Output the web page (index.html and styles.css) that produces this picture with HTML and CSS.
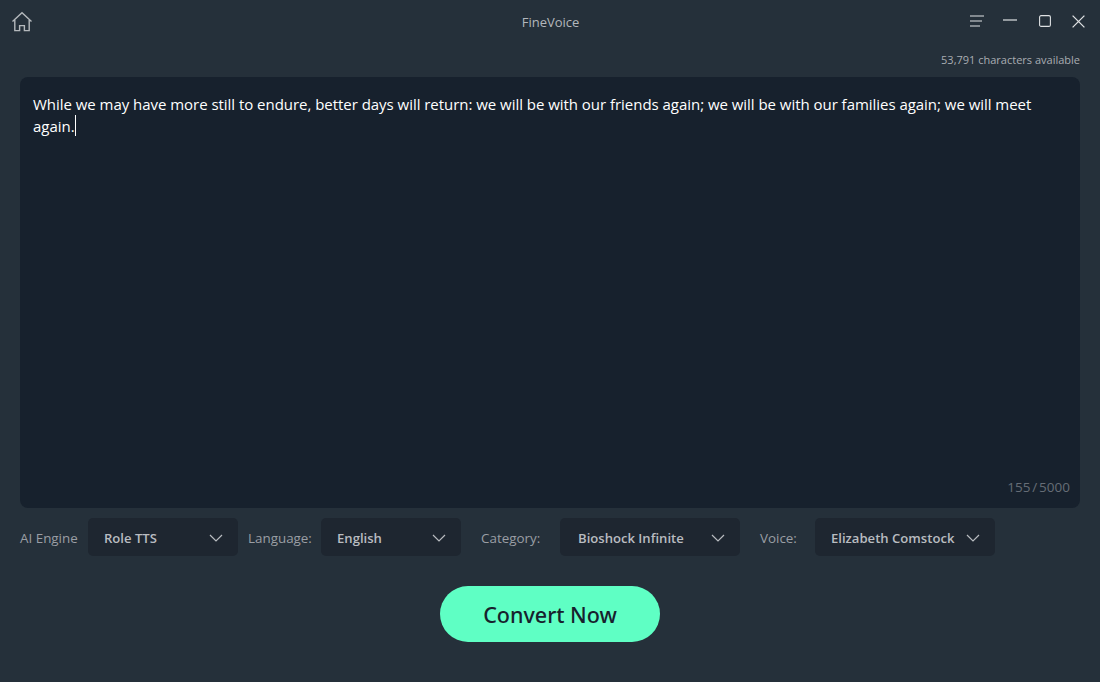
FILE: index.html
```html
<!DOCTYPE html>
<html lang="en">
<head>
    <meta charset="UTF-8">
    <title>FineVoice</title>
    <link rel="stylesheet" href="styles.css">
</head>
<body>
    <div class="app">
        <div class="titlebar">
            <svg class="home-icon" width="22" height="22" viewBox="0 0 22 22" fill="none" stroke="#b4b8bc" stroke-width="1.4">
                <path d="M1.5 10.5 L11 1.8 L20.5 10.5 M3.8 9 V19.6 H8.6 V14.6 H13.4 V19.6 H18.2 V9"/>
            </svg>
            <div class="app-name">FineVoice</div>
            <div class="window-btns">
                <svg class="menu-icon" width="14" height="14" viewBox="0 0 14 14" fill="none" stroke="#dfe1e3" stroke-width="1.2">
                    <path d="M0 2 H14 M0 7 H12 M0 12 H10"/>
                </svg>
                <svg width="14" height="14" viewBox="0 0 14 14" fill="none" stroke="#dfe1e3" stroke-width="1.2">
                    <path d="M0 6 H14"/>
                </svg>
                <svg width="12" height="12" viewBox="0 0 12 12" fill="none" stroke="#dfe1e3" stroke-width="1.1">
                    <rect x="0.6" y="0.6" width="10.8" height="10.8" rx="1.5"/>
                </svg>
                <svg class="close-icon" width="13" height="13" viewBox="0 0 13 13" fill="none" stroke="#dfe1e3" stroke-width="1.3">
                    <path d="M0.6 0.6 L12.4 12.4 M12.4 0.6 L0.6 12.4"/>
                </svg>
            </div>
        </div>
        <div class="quota">53,791 characters available</div>
        <div class="editor">
            <p class="editor-text">While we may have more still to endure, better days will return: we will be with our friends again; we will be with our families again; we will meet again.<span class="caret"></span></p>
            <div class="counter">155 / 5000</div>
        </div>
        <div class="options">
            <span class="opt-label label-engine">AI Engine</span>
            <div class="select select-engine"><span>Role TTS</span><svg width="14" height="8" viewBox="0 0 14 8" fill="none" stroke="#b9bcc0" stroke-width="1.2"><path d="M1 1 L7 7 L13 1"/></svg></div>
            <span class="opt-label label-lang">Language:</span>
            <div class="select select-lang"><span>English</span><svg width="14" height="8" viewBox="0 0 14 8" fill="none" stroke="#b9bcc0" stroke-width="1.2"><path d="M1 1 L7 7 L13 1"/></svg></div>
            <span class="opt-label label-cat">Category:</span>
            <div class="select select-cat"><span>Bioshock Infinite</span><svg width="14" height="8" viewBox="0 0 14 8" fill="none" stroke="#b9bcc0" stroke-width="1.2"><path d="M1 1 L7 7 L13 1"/></svg></div>
            <span class="opt-label label-voice">Voice:</span>
            <div class="select select-voice"><span>Elizabeth Comstock</span><svg width="14" height="8" viewBox="0 0 14 8" fill="none" stroke="#b9bcc0" stroke-width="1.2"><path d="M1 1 L7 7 L13 1"/></svg></div>
        </div>
        <div class="actions">
            <button class="convert-btn">Convert Now</button>
        </div>
    </div>
</body>
</html>
```

FILE: styles.css
```css
html, body {
    margin: 0;
    padding: 0;
}

body {
    font-family: "Open Sans", "Noto Sans", sans-serif;
    background-color: #25303a;
}

.app {
    width: 1100px;
    height: 682px;
    overflow: hidden;
    background-color: #25303a;
}

.titlebar {
    position: relative;
    display: flex;
    align-items: center;
    justify-content: space-between;
    height: 44px;
    padding: 0 14px 0 11px;
}

.home-icon {
    display: block;
}

.app-name {
    position: absolute;
    left: 1px;
    right: 0;
    text-align: center;
    font-size: 13px;
    color: #b3b7bc;
}

.window-btns {
    display: flex;
    align-items: center;
    gap: 22px;
    margin-bottom: 2px;
}

.menu-icon {
    margin-right: -3px;
}

.close-icon {
    margin-right: 1px;
    margin-left: -1px;
}

.quota {
    height: 33px;
    padding: 8px 20px 0 0;
    box-sizing: border-box;
    text-align: right;
    font-size: 11px;
    color: #a9adb2;
}

.editor {
    display: flex;
    flex-direction: column;
    justify-content: space-between;
    height: 431px;
    margin: 0 20px;
    padding: 16px 10px 12px 13px;
    box-sizing: border-box;
    background-color: #17212d;
    border-radius: 8px;
}

.editor-text {
    margin: 0;
    font-size: 15px;
    line-height: 22px;
    letter-spacing: -0.035px;
    color: #fff;
}

.caret {
    display: inline-block;
    width: 1px;
    height: 21px;
    margin-bottom: -4px;
    background-color: #fff;
}

.counter {
    text-align: right;
    font-size: 13.5px;
    word-spacing: -1.6px;
    color: #666d76;
}

.options {
    display: flex;
    align-items: center;
    height: 38px;
    margin: 10px 0 0 20px;
}

.opt-label {
    font-size: 13.4px;
    line-height: 20px;
    padding-top: 1px;
    color: #9a9ea4;
    white-space: nowrap;
}

.label-engine {
    width: 58px;
    margin-right: 10px;
}

.label-lang {
    width: 63px;
    margin-right: 10px;
}

.label-cat {
    width: 59px;
    margin-right: 20px;
}

.label-voice {
    width: 36px;
    margin-right: 19px;
}

.select {
    display: flex;
    align-items: center;
    justify-content: space-between;
    height: 38px;
    box-sizing: border-box;
    padding: 1px 15px 0 16px;
    background-color: #1e2630;
    border-radius: 5px;
    font-size: 13.1px;
    font-weight: 600;
    color: #b9bcc0;
    white-space: nowrap;
}

.select-engine {
    width: 150px;
    margin-right: 10px;
}

.select-lang {
    width: 140px;
    margin-right: 20px;
}

.select-cat {
    width: 180px;
    padding-left: 18px;
    margin-right: 20px;
}

.select-voice {
    width: 180px;
}

.actions {
    display: flex;
    justify-content: center;
    margin-top: 30px;
}

.convert-btn {
    width: 220px;
    height: 56px;
    padding: 0;
    border: none;
    border-radius: 28px;
    background-color: #5fffc4;
    color: #17212d;
    font-family: "Noto Sans", "Open Sans", sans-serif;
    font-size: 21.5px;
    font-weight: 500;
    cursor: pointer;
}
```
